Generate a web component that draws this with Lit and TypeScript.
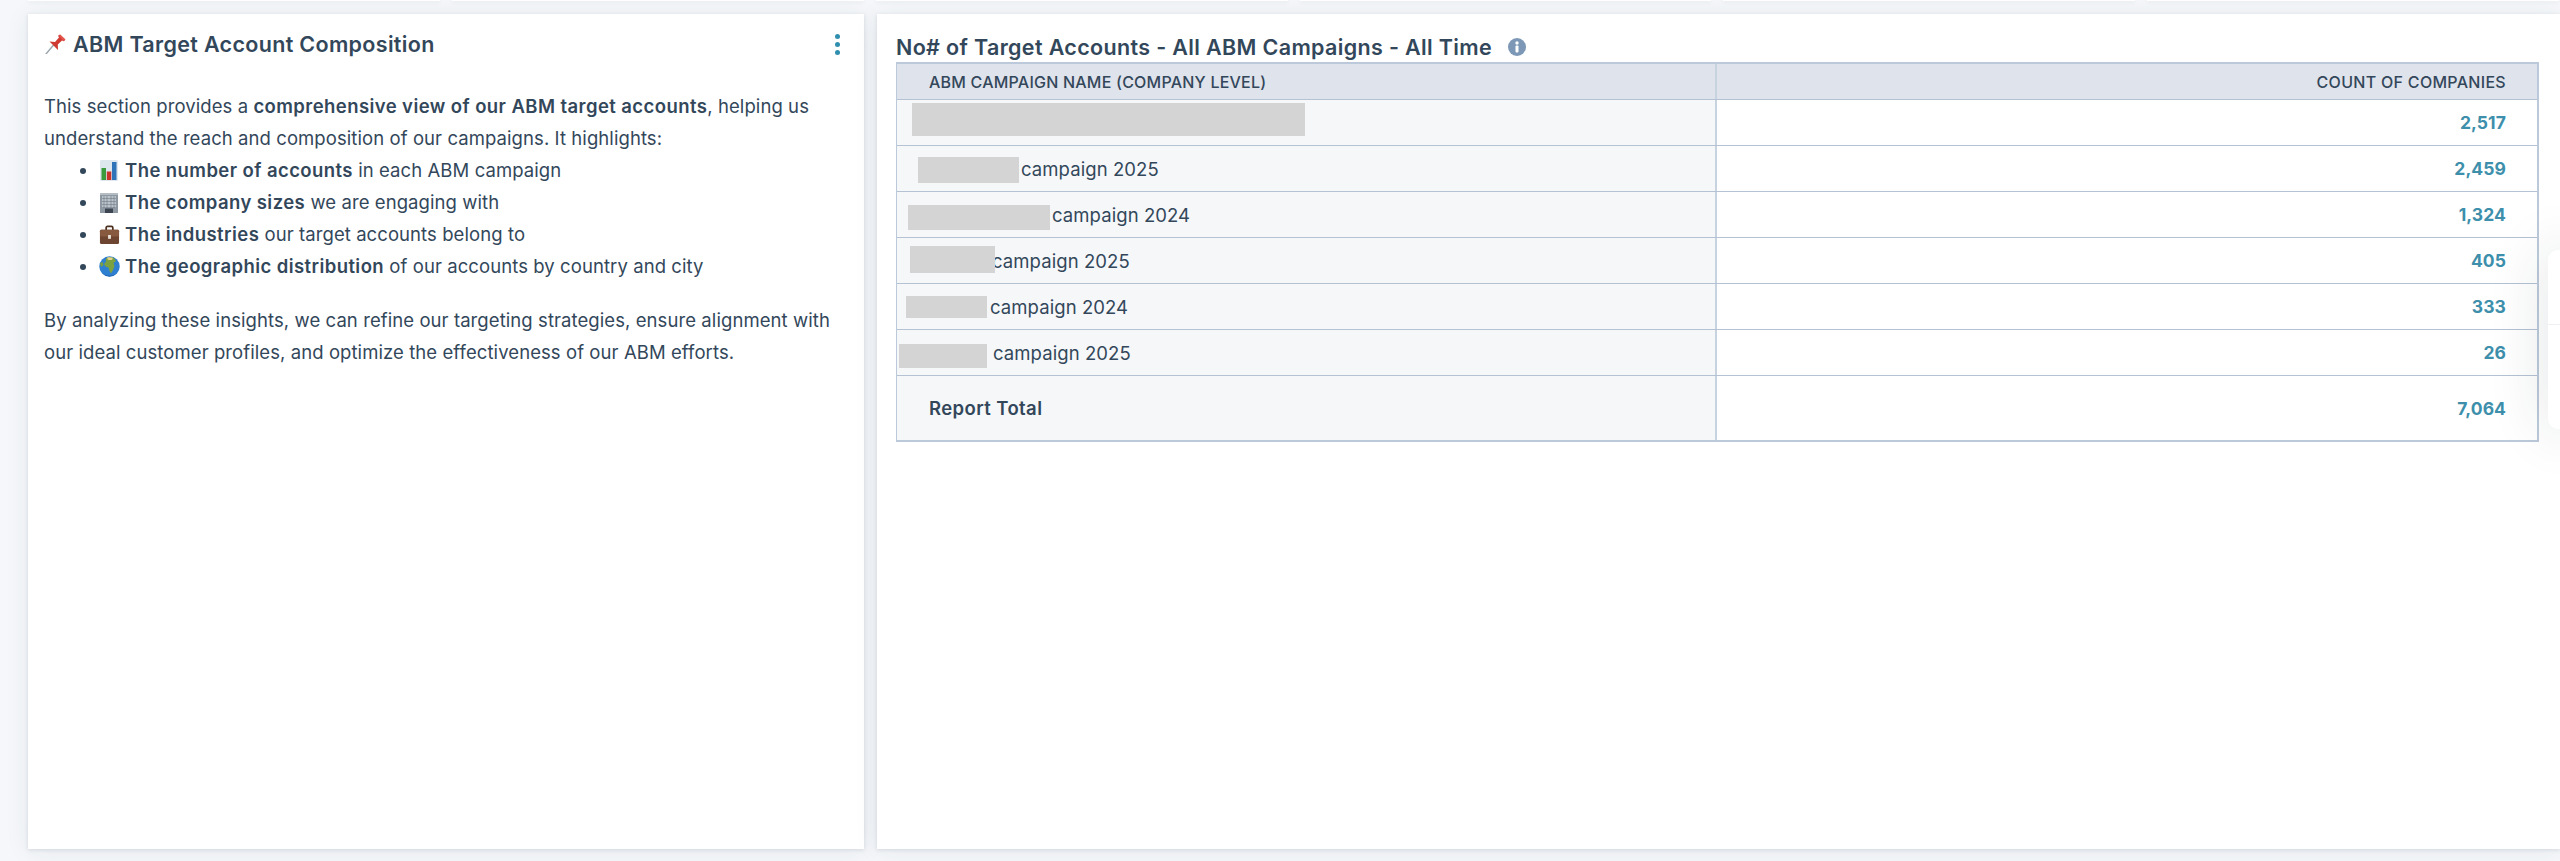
import { LitElement, html, css, svg } from "lit";
import { customElement } from "lit/decorators.js";

const pin = svg`<svg viewBox="0 0 21 20" width="21" height="20">
  <path d="M1 20 L9 10.5" stroke="#9aa5ad" stroke-width="1.4" stroke-linecap="round"/>
  <path d="M4.5 7.5 L10 8 L14 3.6 L13 1.8 L15 .4 L20.4 5.4 L18.8 7.2 L17 6.4 L12.8 10.6 L13 16 Z" fill="#cf3a32"/>
  <path d="M15 .4 L20.4 5.4 L18.8 7.2 L14 2 Z" fill="#e4564b"/>
</svg>`;
const chart = svg`<svg viewBox="0 0 20 21" width="20" height="21">
  <rect x="1" y="0" width="18" height="21" rx="1.5" fill="#dde7ee"/>
  <rect x="2.5" y="8" width="4.5" height="12" fill="#3a9a3c"/>
  <rect x="7.8" y="11.5" width="4.5" height="8.5" fill="#c9352b"/>
  <rect x="13" y="2" width="4.5" height="18" fill="#2f73b8"/>
</svg>`;
const office = svg`<svg viewBox="0 0 20 20" width="20" height="20">
  <rect x="1" y="0" width="18" height="20" fill="#8d98a2"/>
  <rect x="1" y="0" width="18" height="2" fill="#b5bdc4"/>
  <path d="M3 4h14M3 7h14M3 10h14M3 13h14" stroke="#c9d1d8" stroke-width="1.3"/>
  <path d="M5 3v12M8 3v12M12 3v12M15 3v12" stroke="#75808b" stroke-width=".7"/>
  <rect x="6" y="15.5" width="8" height="4.5" fill="#3b4650"/>
</svg>`;
const briefcase = svg`<svg viewBox="0 0 22 20" width="21" height="20">
  <path d="M7.5 5V2.5Q7.5 1 9 1h4q1.500 0 1.500 1.500V5" fill="none" stroke="#4a2f20" stroke-width="1.800"/>
  <rect x="1" y="4.500" width="20" height="15" rx="1.500" fill="#6e4530"/>
  <rect x="1" y="4.500" width="20" height="7" rx="1.500" fill="#875a3f"/>
  <rect x="9.500" y="10" width="3" height="4" fill="#e9e2d8"/>
</svg>`;
const globe = svg`<svg viewBox="0 0 21 21" width="21" height="21">
  <circle cx="10.500" cy="10.500" r="10.200" fill="#2f7fd0"/>
  <path d="M7 2.500 Q11 .5 15 2 L17 5 L14.500 7 L15.500 10 L14 14 L12 17.500 L10.500 15 L9.500 11.500 L6.500 10.500 L5 8 L7 5.500 Z" fill="#7ba23f"/>
  <path d="M8 1.500 Q11 .8 14 1.800 L13 4 L9 4 Z" fill="#e2d18a"/>
  <path d="M1 7 L3.500 6 L4.500 9 L2 11 Z" fill="#7ba23f"/>
  <path d="M4 18 A10 10 0 0 0 17 18 Q10.500 21.500 4 18Z" fill="#1c5aa6"/>
</svg>`;

const rows = [
  { box: { l: 15, w: 393, t: 3, h: 33 }, text: "", value: "2,517" },
  { box: { l: 21, w: 101, t: 11, h: 26 }, text: "campaign 2025", left: 124, value: "2,459" },
  { box: { l: 11, w: 142, t: 13, h: 25 }, text: "campaign 2024", left: 155, value: "1,324" },
  { box: { l: 13, w: 85, t: 8, h: 27 }, text: "campaign 2025", left: 95, value: "405" },
  { box: { l: 9, w: 81, t: 12, h: 22 }, text: "campaign 2024", left: 93, value: "333" },
  { box: { l: 2, w: 88, t: 14, h: 24 }, text: "campaign 2025", left: 96, value: "26" },
];

@customElement("app-root")
export class AppRoot extends LitElement {
  static styles = css`
    :host {
      display: block;
      position: relative;
      height: 861px;
      overflow: hidden;
      background: #f5f7fa;
      color: #33475b;
      font-family: Inter, "Liberation Sans", sans-serif;
      font-size: 18.5px;
      letter-spacing: 0.08px;
    }
    .strip {
      display: grid;
      grid-template-columns: repeat(6, 1fr);
      gap: 12px;
      height: 1px;
      padding: 0 1px 0 28px;
    }
    .strip div, .card {
      background: #fff;
      box-shadow: 0 1px 4px rgba(45, 62, 80, 0.14), 0 2px 24px rgba(45, 62, 80, 0.07);
    }
    .main {
      display: grid;
      grid-template-columns: 836px 1fr;
      gap: 13px;
      height: 835px;
      margin-top: 13px;
      padding-left: 28px;
    }
    .left {
      padding: 18px 16px 0 16px;
      font-weight: 400;
    }
    .head {
      display: flex;
      align-items: center;
      justify-content: space-between;
      height: 24px;
      padding-right: 8px;
    }
    .head-title {
      display: flex;
      align-items: center;
      gap: 7px;
      font-size: 21.5px;
      font-weight: 600;
      letter-spacing: 0.33px;
    }
    .pin { display: flex; margin-left: 1px; }
    .dots { display: flex; flex-direction: column; gap: 3px; }
    .dots i { width: 5px; height: 5px; border-radius: 50%; background: #2f8fae; }
    .body { margin-top: 34px; line-height: 32px; }
    .body p { margin: 0; }
    .body b { font-weight: 600; letter-spacing: 0.42px; }
    ul { margin: 0 0 22px; padding-left: 55px; }
    .emoji {
      display: inline-flex;
      width: 21px;
      margin-right: 5px;
      vertical-align: -4px;
    }
    .right { padding: 20px 21px 0 19px; }
    .title {
      display: flex;
      align-items: center;
      gap: 16px;
      height: 28px;
      margin-top: -1px;
      margin-bottom: 1px;
      font-size: 21.5px;
      font-weight: 600;
      letter-spacing: 0.35px;
    }
    .info { display: flex; }
    .table { border: 1px solid #bcc9da; border-top-width: 2px; border-bottom-width: 2px; border-right-width: 2px; }
    .row {
      display: grid;
      grid-template-columns: 820px 1fr;
      box-sizing: border-box;
      height: 46px;
      border-bottom: 1px solid #b4c2d4;
    }
    .row:last-child { border-bottom: 0; height: 64px; }
    .row.header { height: 36px; background: #dfe3eb; font-weight: 500; }
    .cell-l {
      position: relative;
      display: flex;
      align-items: center;
      background: #f6f7f9;
      border-right: 2px solid #c8d3e0;
      white-space: nowrap;
    }
    .header .cell-l { background: transparent; font-size: 16px; letter-spacing: 0.22px; padding-left: 32px; }
    .cell-r {
      display: flex;
      align-items: center;
      justify-content: flex-end;
      padding-right: 31px;
      font-weight: 700;
      color: #3d8fab;
      font-size: 17.5px;
    }
    .header .cell-r { color: #33475b; font-weight: 500; font-size: 16px; letter-spacing: 0.3px; }
    .box { position: absolute; background: #d4d4d4; }
    .total { font-weight: 600; padding-left: 32px; letter-spacing: 0.4px; }
    .float {
      position: absolute;
      left: 2548px;
      top: 250px;
      width: 40px;
      height: 179px;
      box-sizing: border-box;
      border-radius: 10px;
      background: #fff;
      box-shadow: 0 0 60px rgba(30, 40, 60, 0.14);
    }
    .float div { height: 74px; border-bottom: 1px solid #eef0f3; }
  `;

  render() {
    return html`
      <div class="strip"><div></div><div></div><div></div><div></div><div></div><div></div></div>
      <div class="main">
        <section class="card left">
          <div class="head">
            <div class="head-title"><span class="pin">${pin}</span><span>ABM Target Account Composition</span></div>
            <div class="dots"><i></i><i></i><i></i></div>
          </div>
          <div class="body">
            <p>This section provides a <b>comprehensive view of our ABM target accounts</b>, helping us understand the reach and composition of our campaigns. It highlights:</p>
            <ul>
              <li><span class="emoji">${chart}</span><b>The number of accounts</b> in each ABM campaign</li>
              <li><span class="emoji">${office}</span><b>The company sizes</b> we are engaging with</li>
              <li><span class="emoji">${briefcase}</span><b>The industries</b> our target accounts belong to</li>
              <li><span class="emoji">${globe}</span><b>The geographic distribution</b> of our accounts by country and city</li>
            </ul>
            <p>By analyzing these insights, we can refine our targeting strategies, ensure alignment with our ideal customer profiles, and optimize the effectiveness of our ABM efforts.</p>
          </div>
        </section>
        <section class="card right">
          <div class="title">
            <span>No# of Target Accounts - All ABM Campaigns - All Time</span>
            <span class="info"><svg viewBox="0 0 18 18" width="18" height="18"><circle cx="9" cy="9" r="9" fill="#7c98b6"/><circle cx="9" cy="5" r="1.700" fill="#fff"/><rect x="7.500" y="7.500" width="3" height="7" rx="1" fill="#fff"/></svg></span>
          </div>
          <div class="table">
            <div class="row header">
              <div class="cell-l">ABM CAMPAIGN NAME (COMPANY LEVEL)</div>
              <div class="cell-r">COUNT OF COMPANIES</div>
            </div>
            ${rows.map(
              (r) => html`<div class="row">
                <div class="cell-l">
                  ${r.text ? html`<span style="margin-left:${r.left}px">${r.text}</span>` : ""}
                  <span class="box" style="left:${r.box.l}px;width:${r.box.w}px;top:${r.box.t}px;height:${r.box.h}px"></span>
                </div>
                <div class="cell-r">${r.value}</div>
              </div>`
            )}
            <div class="row">
              <div class="cell-l total">Report Total</div>
              <div class="cell-r">7,064</div>
            </div>
          </div>
        </section>
      </div>
      <div class="float"><div></div></div>
    `;
  }
}
